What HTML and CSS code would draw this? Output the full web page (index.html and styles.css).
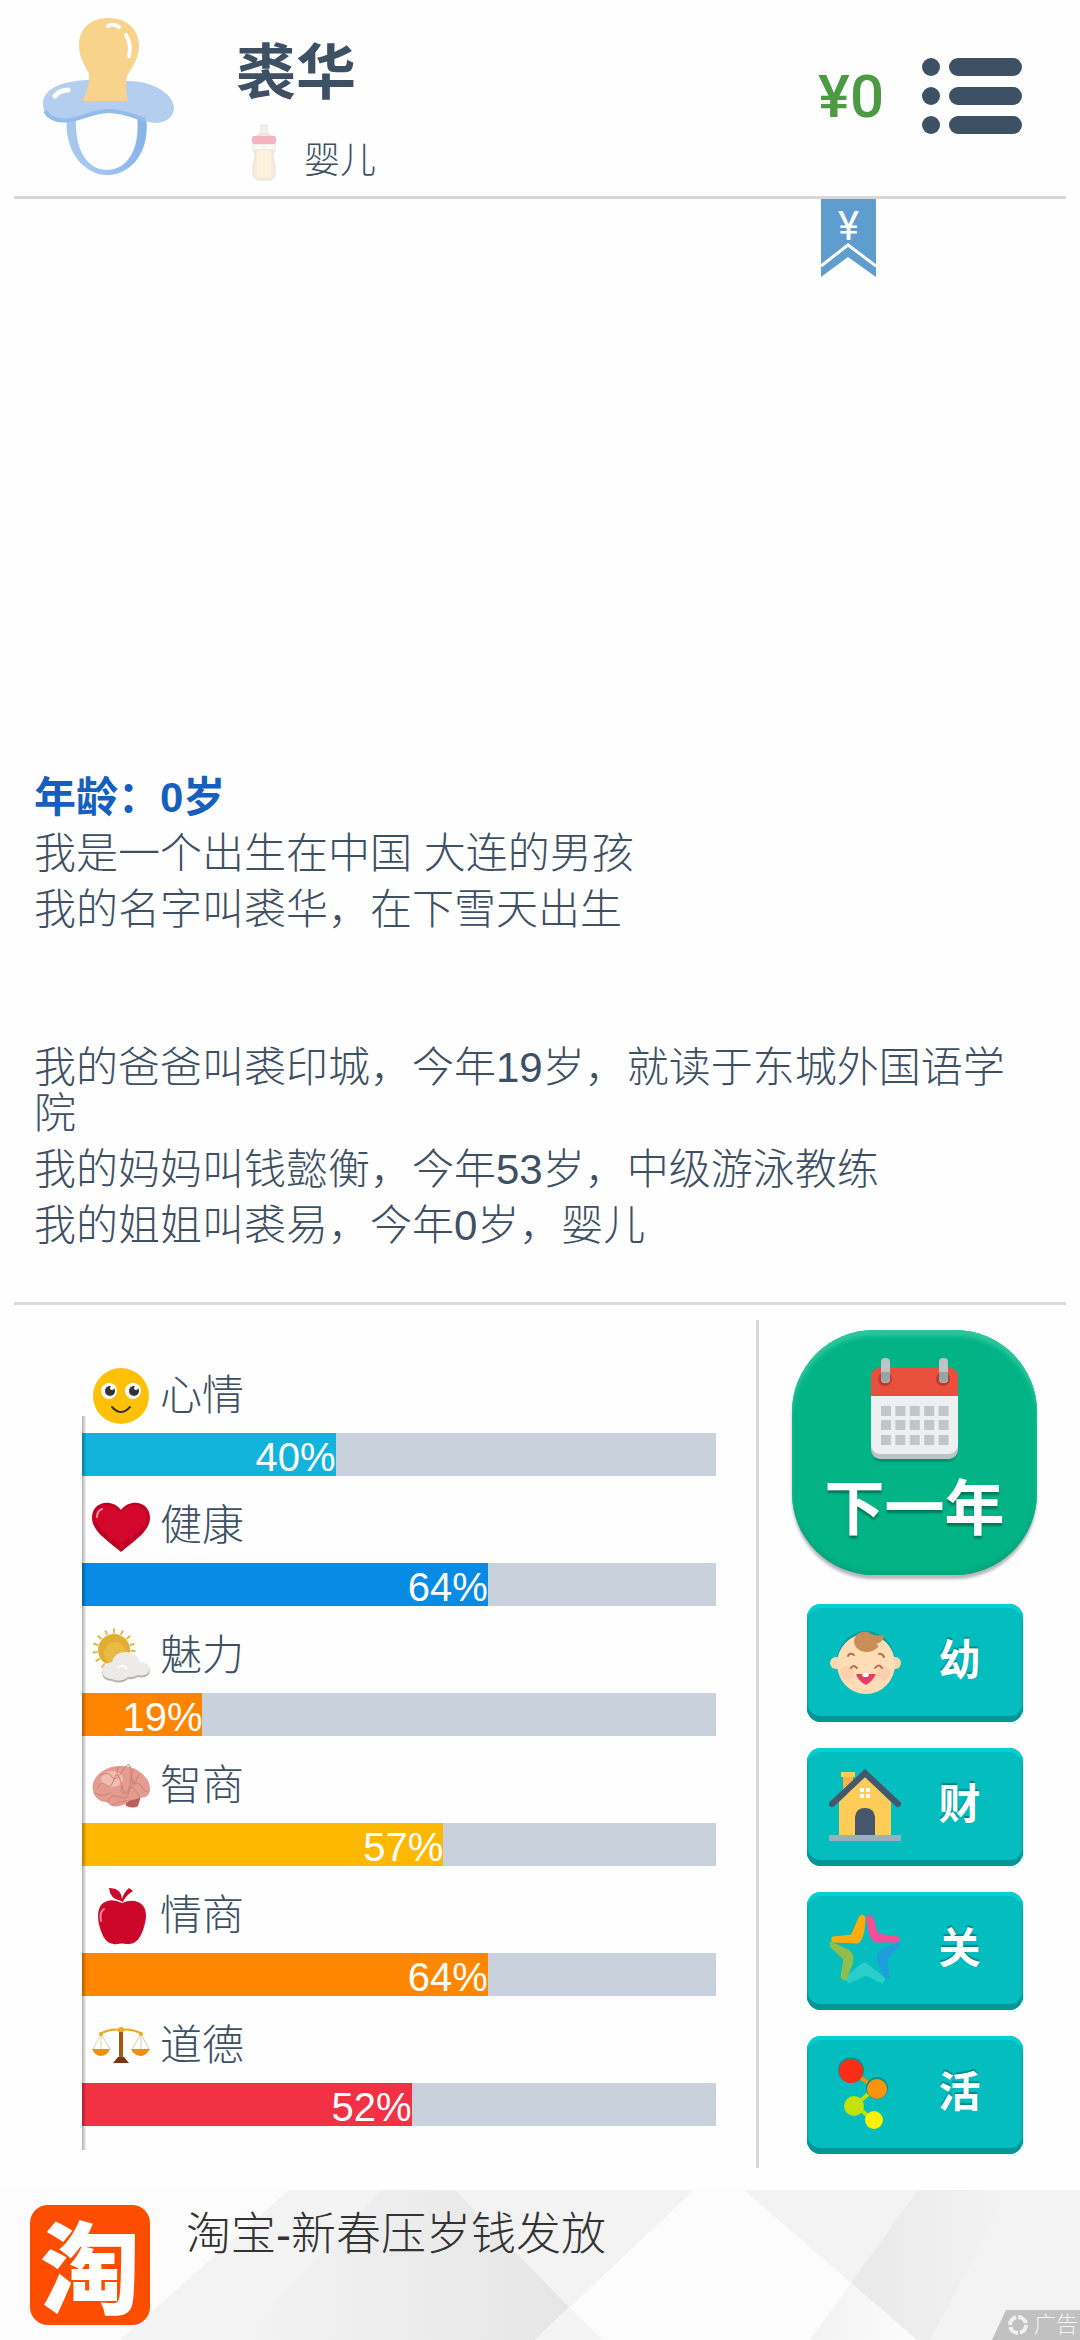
FILE: index.html
```html
<!DOCTYPE html>
<html lang="zh-CN">
<head>
  <meta charset="UTF-8">
  <meta name="viewport" content="width=device-width, initial-scale=1.0">
  <title>裘华</title>
  <link rel="stylesheet" href="styles.css">
</head>
<body>
  <header class="top-bar">
    <svg class="avatar" viewBox="0 0 131 157">
      <defs>
        <linearGradient id="ring" x1="0" x2="1"><stop offset="0" stop-color="#a9c8ee"/><stop offset="0.5" stop-color="#9fc3ef"/><stop offset="1" stop-color="#84b3e8"/></linearGradient>
      </defs>
      <path fill="url(#ring)" fill-rule="evenodd" d="M24 98 C20 134 42 157 64 157 C88 157 108 134 103 98 Z M33 98 C31 134 46 152 64 152 C82 152 98 134 94 98 Z"/>
      <path fill="#b4ceef" d="M45 62 C22 63 0 69 0 86 C0 98 10 105 24 104 C42 102 48 96 66 95 C85 95 96 103 112 105 C124 105 131 98 131 90 C131 74 105 62 84 63 Z"/>
      <path fill="none" stroke="#91bcec" stroke-width="4" d="M2 93 Q9 105 28 102 C44 99 50 93 66 93 C80 93 90 98 102 102"/>
      <path fill="#f7d38b" d="M40 83 Q46 70 46 56 C40 44 36 38 36 27 C36 10 48 0 66 0 C84 0 96 12 96 27 C96 40 90 48 84 58 Q82 70 85 83 Z"/>
      <path fill="none" stroke="#fff" stroke-width="4" stroke-linecap="round" d="M65 8 Q71 5 76 9 M83 17 Q89 27 86 38"/>
      <path fill="none" stroke="#fff" stroke-width="5" stroke-linecap="round" d="M12 78 Q17 72 25 72"/>
    </svg>
    <div class="person">
      <h1 class="name">裘华</h1>
      <div class="stage">
        <svg class="bottle" viewBox="0 0 40 57">
          <path fill="#f7f2ef" stroke="#e5dedb" d="M17 1 Q20 3 23 1 V7 L25 11 H15 L17 7 Z M11 13 Q20 6 29 13 Z"/>
          <rect x="9" y="20" width="22" height="8" fill="#fbf7f2" stroke="#ece4df"/>
          <path fill="#f5ecdf" stroke="#e8dcd3" d="M11 26 H29 Q28 34 31 42 V50 Q30 56 24 56 H16 Q10 56 9 50 V42 Q12 34 11 26 Z"/>
          <rect x="13" y="26" width="14" height="27" rx="3" fill="#fbf2de"/>
          <rect x="8" y="12" width="24" height="8" rx="2" fill="#f4b3c0"/>
        </svg>
        <span>婴儿</span>
      </div>
    </div>
    <div class="money">¥0</div>
    <button class="menu-btn" aria-label="菜单">
      <svg viewBox="0 0 100 76">
        <g fill="#3d5064">
          <circle cx="9" cy="9" r="9"/><circle cx="9" cy="38" r="9"/><circle cx="9" cy="67" r="9"/>
          <rect x="27" y="0" width="73" height="18" rx="9"/>
          <rect x="27" y="29" width="73" height="18" rx="9"/>
          <rect x="27" y="58" width="73" height="18" rx="9"/>
        </g>
      </svg>
    </button>
    <button class="bookmark" aria-label="资产">
      <svg viewBox="0 0 55 78">
        <path fill="#5f9dcf" d="M0 0 H55 V78 L27 58 L0 78 Z"/>
        <path fill="none" stroke="#fff" stroke-width="3" d="M0 67 L27 46 L55 67"/>
      </svg>
      <span>¥</span>
    </button>
  </header>

  <main class="log">
    <h2 class="age">年龄：0岁</h2>
    <p>我是一个出生在中国 大连的男孩</p>
    <p>我的名字叫裘华，在下雪天出生</p>
    <p class="family">我的爸爸叫裘印城，今年19岁，就读于东城外国语学院</p>
    <p>我的妈妈叫钱懿衡，今年53岁，中级游泳教练</p>
    <p>我的姐姐叫裘易，今年0岁，婴儿</p>
  </main>

  <section class="panel">
    <div class="stats">
      <div class="chart">
        <div class="stat">
          <div class="stat-head">
            <svg viewBox="0 0 58 58">
              <circle cx="29" cy="29" r="28" fill="#ffc107"/>
              <circle cx="17" cy="24" r="8" fill="#fff"/><circle cx="41" cy="24" r="8" fill="#fff"/>
              <circle cx="18" cy="24" r="5" fill="#333"/><circle cx="42" cy="24" r="5" fill="#333"/>
              <circle cx="20" cy="21" r="2" fill="#fff"/><circle cx="44" cy="21" r="2" fill="#fff"/>
              <path d="M20 40 Q29 50 38 40" fill="none" stroke="#333" stroke-width="2" stroke-linecap="round"/>
            </svg>
            <span>心情</span>
          </div>
          <div class="bar"><div class="fill mood" style="width: 40%">40%</div></div>
        </div>
        <div class="stat">
          <div class="stat-head">
            <svg viewBox="0 0 58 58">
              <path fill="#c00024" d="M29 55 C16 44 0 34 0 21 C0 4 20 1 29 13 C38 1 58 4 58 21 C58 34 42 44 29 55 Z"/>
              <path fill="#d3062b" d="M29 47 C17 39 3 31 3 20 C5 7 21 4 29 16 C37 4 53 7 55 20 C55 31 41 39 29 47 Z"/>
              <path fill="none" stroke="#ff8d9c" stroke-width="2" stroke-linecap="round" d="M5 20 Q5 14 10 12"/>
            </svg>
            <span>健康</span>
          </div>
          <div class="bar"><div class="fill health" style="width: 64%">64%</div></div>
        </div>
        <div class="stat">
          <div class="stat-head">
            <svg viewBox="0 0 58 58">
              <circle cx="22" cy="23" r="19" fill="none" stroke="#e8b545" stroke-width="5" stroke-dasharray="2 6"/>
              <circle cx="22" cy="23" r="16" fill="#e1ad32"/>
              <circle cx="23" cy="26" r="11" fill="#e9ba45"/>
              <path fill="#b9b0a8" d="M20 54 Q11 54 10 46 Q10 38 20 37 Q23 26 35 27 Q45 28 48 37 Q58 38 58 44 Q56 52 46 50 Q40 53 36 52 Q29 58 20 54 Z"/>
              <path fill="#eeeae7" d="M20 52 Q11 52 10 44 Q10 36 20 35 Q23 24 35 25 Q45 26 48 35 Q58 36 58 42 Q56 50 46 48 Q40 51 36 50 Q29 56 20 52 Z"/>
              <path fill="none" stroke="#fff" stroke-width="2" d="M26 41 Q31 36 35 42"/>
            </svg>
            <span>魅力</span>
          </div>
          <div class="bar"><div class="fill charm" style="width: 19%">19%</div></div>
        </div>
        <div class="stat">
          <div class="stat-head">
            <svg viewBox="0 0 58 58">
              <path fill="#bb5f59" d="M33 44 Q40 37 49 39 L46 49 Q42 52 34 49 Z"/>
              <path fill="#e39c8f" d="M1 33 C-2 22 11 9 28 9 C44 8 58 20 58 32 C58 39 52 42 48 40 C46 43 40 42 37 44 C31 50 20 52 15 45 C8 46 1 39 1 33 Z"/>
              <ellipse cx="20" cy="22" rx="11" ry="8" fill="#f1bdb2"/>
              <g fill="none" stroke="#cd8075" stroke-width="1" stroke-linecap="round">
                <path d="M6 31 Q9 23 14 28 T22 22 T30 29 T39 22 M10 18 Q17 14 20 20 T31 13 T39 18 T47 17 M40 29 Q46 23 50 30 T56 34 M16 45 Q18 36 27 40 T37 34 T47 39 M3 36 Q12 41 18 36 M26 10 Q23 17 28 21 M42 12 Q36 20 43 27 M30 29 Q27 36 33 37 M20 48 Q27 44 34 44"/>
              </g>
            </svg>
            <span>智商</span>
          </div>
          <div class="bar"><div class="fill iq" style="width: 57%">57%</div></div>
        </div>
        <div class="stat">
          <div class="stat-head">
            <svg viewBox="0 0 58 58">
              <path fill="#cc0729" d="M30 16 Q20 11 13 15 C4 19 5 34 9 44 Q14 59 25 57 Q30 56 35 57 Q46 58 51 43 C56 29 55 19 46 15 Q39 12 30 16 Z"/>
              <path fill="#cc0729" d="M29 14 Q18 12 17 1 Q29 1 30 12 Q32 5 37 1 L41 4 Q34 8 31 15 Z"/>
              <path fill="none" stroke="#f58493" stroke-width="2" stroke-linecap="round" d="M9 34 Q7 26 12 22"/>
            </svg>
            <span>情商</span>
          </div>
          <div class="bar"><div class="fill eq" style="width: 64%">64%</div></div>
        </div>
        <div class="stat">
          <div class="stat-head">
            <svg viewBox="0 0 58 58">
              <g fill="none" stroke="#ddcfae" stroke-width="1"><path d="M9 17 L1 32 M9 17 L18 32 M9 17 V32 M49 17 L40 32 M49 17 L57 32 M49 17 V32"/></g>
              <path fill="none" stroke="#efa91c" stroke-width="2" d="M8 17 Q18 11 29 13 Q40 11 50 17"/>
              <circle cx="9" cy="17" r="2" fill="#efa91c"/><circle cx="49" cy="17" r="2" fill="#efa91c"/><circle cx="29" cy="13" r="3" fill="#efa91c"/>
              <path fill="#ec8f12" d="M0 32 H18 Q15 39 9 39 Q3 39 0 32 Z M39 32 H58 Q54 39 49 39 Q42 39 39 32 Z"/>
              <path fill="#a85519" d="M27 15 H31 V41 H27 Z"/>
              <path fill="#7a3511" d="M26 40 H32 L37 46 H21 Z"/>
            </svg>
            <span>道德</span>
          </div>
          <div class="bar"><div class="fill moral" style="width: 52%">52%</div></div>
        </div>
      </div>
    </div>

    <nav class="actions">
      <button class="next-year">
        <svg viewBox="0 0 87 104">
          <path fill="#00936f" d="M0 92 H87 Q86 104 76 104 H11 Q1 104 0 92 Z"/>
          <rect y="20" width="87" height="81" rx="9" fill="#bdc3c7"/>
          <rect y="20" width="87" height="76" rx="9" fill="#ecf0f1"/>
          <path fill="#e84f3d" d="M0 38 V19 Q0 10 9 10 H78 Q87 10 87 19 V38 Z"/>
          <circle cx="14" cy="21" r="7" fill="#c0392b"/><circle cx="72" cy="21" r="7" fill="#c0392b"/>
          <rect x="10" width="9" height="25" rx="4" fill="#bdc3c7"/><rect x="68" width="9" height="25" rx="4" fill="#bdc3c7"/>
          <path fill="#95a5a5" d="M10 14 H19 V21 Q14 28 10 21 Z M68 14 H77 V21 Q72 28 68 21 Z"/>
          <path stroke="#c1c6c9" stroke-width="10" stroke-dasharray="10 4.4" d="M10 53 H78 M10 67 H78 M10 82 H78"/>
        </svg>
        <span>下一年</span>
      </button>
      <button class="action">
        <svg viewBox="0 0 72 72">
          <ellipse cx="37" cy="37" rx="29" ry="31" fill="#079d9e"/>
          <circle cx="7" cy="38" r="6" fill="#fcd6ae"/><circle cx="66" cy="38" r="6" fill="#fcd6ae"/>
          <ellipse cx="37" cy="39" rx="29" ry="30" fill="#fddcb6"/>
          <circle cx="18" cy="48" r="7" fill="#fccfae"/><circle cx="55" cy="48" r="7" fill="#fccfae"/>
          <path fill="#c98d5a" d="M25 15 Q28 5 39 7 Q45 12 55 10 Q54 18 47 19 Q51 21 48 23 Q41 29 32 26 Q24 22 25 15 Z"/>
          <path fill="none" stroke="#a9754f" stroke-width="2" stroke-linecap="round" d="M22 43 Q24 39 28 43 M46 43 Q50 38 53 43 M19 31 Q21 27 25 30 M50 29 Q53 28 55 32"/>
          <path fill="#e83e66" d="M27 49 H33 V51 H40 V49 H47 Q44 56 37 60 Q29 56 27 49 Z"/>
          <path fill="#fff" d="M34 48 H39 V52 H34 Z"/>
        </svg>
        <span>幼</span>
      </button>
      <button class="action">
        <svg viewBox="0 0 72 72">
          <path fill="#f8b344" d="M14 6 H24 V25 H14 Z"/>
          <path fill="#ffcc57" d="M12 3 H26 V8 H12 Z M10 33 L36 8 L62 33 V66 H10 Z"/>
          <path fill="none" stroke="#46566b" stroke-width="6" stroke-linecap="round" d="M3 35 L36 4 L69 35"/>
          <path fill="#fff" d="M31 19 H35 V23 H31 Z M37 19 H41 V23 H37 Z M31 25 H35 V29 H31 Z M37 25 H41 V29 H37 Z"/>
          <path fill="#46566b" d="M26 66 V48 Q27 39 36 39 Q45 39 46 48 V66 Z"/>
          <path fill="#99b0be" d="M0 66 H72 V72 H0 Z"/>
        </svg>
        <span>财</span>
      </button>
      <button class="action">
        <svg viewBox="0 0 72 72">
          <g stroke-linejoin="round" stroke-width="3">
            <path fill="#feac0d" stroke="#feac0d" d="M31 5 Q33 1 35 5 Q34 28 28 29 L4 28 V25 L23 23 Z"/>
            <path fill="#f94c99" stroke="#f94c99" d="M39 5 Q41 1 43 6 L48 22 L69 25 V28 H48 Q41 27 39 5 Z"/>
            <path fill="#209ddc" stroke="#209ddc" d="M70 30 L53 38 Q47 42 51 51 L57 65 L59 64 L57 46 Z"/>
            <path fill="#2bcccc" stroke="#2bcccc" d="M36 51 Q34 50 18 65 L20 69 L37 61 L53 69 L55 66 Z"/>
            <path fill="#93bd4a" stroke="#93bd4a" d="M2 30 L19 38 Q25 42 22 51 L16 66 L13 64 L16 46 L3 34 Z"/>
          </g>
        </svg>
        <span>关</span>
      </button>
      <button class="action">
        <svg viewBox="0 0 72 72">
          <path fill="none" stroke="#ff8908" stroke-width="4" d="M28 18 L45 30"/>
          <path fill="none" stroke="#c8dc08" stroke-width="4" d="M47 31 L26 48 L44 63"/>
          <circle cx="22" cy="13" r="13" fill="#079191"/><circle cx="22" cy="14" r="12" fill="#fd2c16"/>
          <circle cx="48" cy="31" r="11" fill="#079191"/><circle cx="48" cy="32" r="10" fill="#ff930c"/>
          <circle cx="25" cy="49" r="10" fill="#c1e30a"/>
          <circle cx="45" cy="63" r="9" fill="#fff200"/>
        </svg>
        <span>活</span>
      </button>
    </nav>
  </section>

  <a class="ad" href="#">
    <svg class="ad-bg" viewBox="0 0 1080 150" preserveAspectRatio="none">
      <defs>
        <linearGradient id="mid" x1="0" x2="1"><stop offset="0" stop-color="#f3f3f3"/><stop offset="1" stop-color="#e6e6e6"/></linearGradient>
        <linearGradient id="fade"><stop offset="0" stop-color="#e9e9e9"/><stop offset="1" stop-color="#f3f3f3"/></linearGradient>
        <linearGradient id="low"><stop offset="0" stop-color="#f2f2f2"/><stop offset="1" stop-color="#fcfcfc"/></linearGradient>
      </defs>
      <path fill="#f3f3f3" d="M289 0 H694 L535 150 H120 Z M744 0 H1080 V150 H917 Z"/>
      <path fill="url(#mid)" d="M382 0 H455 L569 117 L535 150 H240 Z"/>
      <path fill="#f4f4f4" d="M569 117 L603 150 H535 Z"/>
      <path fill="url(#fade)" d="M918 0 H1010 L930 150 H917 L851 93 Z"/>
      <path fill="url(#low)" d="M851 93 L917 150 H810 Z"/>
    </svg>
    <span class="ad-logo">淘</span>
    <span class="ad-title">淘宝-新春压岁钱发放</span>
    <span class="ad-tag">
      <svg viewBox="0 0 20 20"><circle cx="10" cy="10" r="8" fill="none" stroke="#f0f0f0" stroke-width="4" stroke-dasharray="10.5 2"/></svg>
      广告
    </span>
  </a>
</body>
</html>
```

FILE: styles.css
```css
* {
  box-sizing: border-box;
}

body {
  display: flex;
  flex-direction: column;
  min-height: 100vh;
  margin: 0;
  background-color: #fefefe;
  color: #3d5064;
  font-family: "Liberation Sans", "Noto Sans CJK SC", sans-serif;
  font-size: 42px;
  font-weight: 300;
}

h1, h2, p {
  margin: 0;
}

svg {
  display: block;
}

button {
  padding: 0;
  border: none;
  background: none;
  font-family: inherit;
  cursor: pointer;
}

/* header */
.top-bar {
  position: relative;
  display: flex;
  align-items: center;
  height: 199px;
  margin: 0 14px;
  padding: 0 44px 4px 29px;
  border-bottom: 3px solid #d8d8d8;
}

.avatar {
  width: 131px;
  height: 157px;
}

.person {
  flex: 1;
  padding: 26px 0 0 62px;
}

.name {
  font-size: 60px;
  font-weight: 700;
  line-height: 72px;
}

.stage {
  display: flex;
  align-items: flex-end;
  gap: 20px;
  margin-top: 14px;
  padding-left: 8px;
  font-size: 36px;
  line-height: 40px;
}

.bottle {
  width: 40px;
  height: 57px;
}

.money {
  margin-right: 38px;
  color: #4c9a41;
  font-family: Roboto, sans-serif;
  font-size: 60px;
  font-weight: 500;
}

.menu-btn svg {
  width: 100px;
  height: 76px;
}

.bookmark {
  position: absolute;
  top: 199px;
  right: 190px;
  width: 55px;
  height: 78px;
}

.bookmark svg {
  width: 55px;
  height: 78px;
}

.bookmark span {
  position: absolute;
  top: 6px;
  left: 0;
  width: 100%;
  color: #fff;
  font-family: Roboto, sans-serif;
  font-size: 40px;
  line-height: 44px;
  text-align: center;
}

/* life log */
.log {
  flex: 1;
  display: flex;
  flex-direction: column;
  justify-content: flex-end;
  gap: 10px;
  margin: 0 14px;
  padding: 0 24px 53px 20px;
  border-bottom: 3px solid #d8d8de;
  line-height: 46px;
}

.age {
  color: #1560bd;
  font-size: 42px;
  font-weight: 700;
}

.family {
  margin-top: 102px;
}

/* stats and actions */
.panel {
  display: flex;
  padding: 15px 0 22px;
}

.stats {
  flex: 1;
  padding: 26px 40px 42px 82px;
  border-right: 3px solid #d8d8dc;
}

.chart {
  position: relative;
}

.chart::before {
  content: "";
  position: absolute;
  top: 70px;
  bottom: -24px;
  left: 0;
  width: 4px;
  background: linear-gradient(to right, rgba(0, 0, 0, 0.3), rgba(0, 0, 0, 0.05));
}

.stat-head {
  display: flex;
  align-items: center;
  gap: 10px;
  padding: 21px 0 8px 10px;
  line-height: 58px;
}

.stat-head svg {
  width: 58px;
  height: 58px;
}

.bar {
  height: 43px;
  background-color: #c9d2dc;
}

.fill {
  height: 43px;
  color: #fff;
  font-size: 40px;
  line-height: 48px;
  text-align: right;
}

.mood { background-color: #12b4dc; }
.health { background-color: #078be4; }
.charm { background-color: #ff8400; }
.iq { background-color: #ffb800; }
.eq { background-color: #ff8700; }
.moral { background-color: #f23244; }

.actions {
  display: flex;
  flex-direction: column;
  align-items: center;
  width: 321px;
  padding: 10px 10px 0 0;
}

.next-year {
  display: flex;
  flex-direction: column;
  align-items: center;
  gap: 12px;
  width: 245px;
  height: 245px;
  margin-bottom: 29px;
  padding-top: 28px;
  border-radius: 82px;
  background-color: #02b386;
  box-shadow: inset 0 6px 4px #2bc79c, inset 0 -4px 4px #03a67c, 0 4px 3px #b9b5bb;
  color: #fff;
  font-size: 60px;
  font-weight: 700;
  line-height: 72px;
  text-shadow: 0 3px 2px #027a5c;
}

.next-year svg {
  width: 87px;
  height: 104px;
}

.action {
  display: flex;
  align-items: center;
  gap: 38px;
  width: 216px;
  height: 118px;
  margin-bottom: 26px;
  padding: 0 22px 4px;
  border-radius: 14px;
  background-color: #04bdbf;
  box-shadow: inset 0 -6px 0 #029697, inset 0 4px 1px #03d2d4, inset 0 0 2px 1px #039fa0;
  color: #fff;
  font-size: 42px;
  font-weight: 700;
  line-height: 60px;
  text-shadow: 0 -2px 1px #03898a;
}

.action:last-child {
  margin-bottom: 0;
}

.action svg {
  width: 72px;
  height: 72px;
}

/* ad banner */
.ad {
  position: relative;
  display: flex;
  gap: 36px;
  height: 150px;
  padding: 15px 30px;
  background-color: #fcfcfc;
  color: #333;
  text-decoration: none;
}

.ad-bg {
  position: absolute;
  top: 0;
  left: 0;
  width: 100%;
  height: 100%;
}

.ad-logo {
  position: relative;
  width: 120px;
  height: 120px;
  border-radius: 18px;
  background-color: #ff4d00;
  color: #fff;
  font-size: 100px;
  font-weight: 900;
  line-height: 132px;
  text-align: center;
}

.ad-title {
  position: relative;
  font-size: 45px;
  line-height: 60px;
}

.ad-tag {
  position: absolute;
  right: 0;
  bottom: 0;
  display: flex;
  align-items: center;
  gap: 6px;
  height: 30px;
  padding: 0 2px 0 16px;
  background-color: #c1c1c1;
  clip-path: polygon(14px 0, 100% 0, 100% 100%, 0 100%);
  color: #f4f4f4;
  font-size: 22px;
  line-height: 30px;
}

.ad-tag svg {
  width: 20px;
  height: 20px;
}
```
